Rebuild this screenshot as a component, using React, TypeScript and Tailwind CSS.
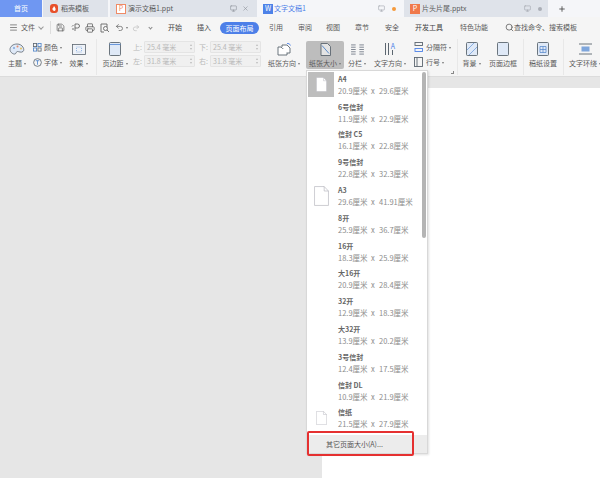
import type { ReactNode } from "react";
import { Menu, Monitor, Plus, Printer, Save, Undo2, Redo2, Search, X } from "lucide-react";

// name + the two dimensions of every paper size in the dropdown
const papers = [
  { name: "A4", w: "20.9", h: "29.6" },
  { name: "6号信封", w: "11.9", h: "22.9" },
  { name: "信封 C5", w: "16.1", h: "22.8" },
  { name: "9号信封", w: "22.8", h: "32.3" },
  { name: "A3", w: "29.6", h: "41.91" },
  { name: "8开", w: "25.9", h: "36.7" },
  { name: "16开", w: "18.3", h: "25.9" },
  { name: "大16开", w: "20.9", h: "28.4" },
  { name: "32开", w: "12.9", h: "18.3" },
  { name: "大32开", w: "13.9", h: "20.2" },
  { name: "3号信封", w: "12.4", h: "17.5" },
  { name: "信封 DL", w: "10.9", h: "21.9" },
  { name: "信纸", w: "21.5", h: "27.9" },
];

function Sheet({ className }: { className: string }) {
  return (
    <svg className={className} viewBox="0 0 14 18" preserveAspectRatio="none">
      <path d="M.5.5h9l4 4v13H.5z" fill="#fff" stroke="#b4b4bc" strokeWidth="0.6" />
      <path d="M9.5.5v4h4" fill="none" stroke="#b4b4bc" strokeWidth="0.6" />
    </svg>
  );
}

function Caret() {
  return <span className="ml-[2px] inline-block h-0 w-0 border-x-[1.5px] border-t-[2px] border-x-transparent border-t-[#777] align-middle" />;
}

function Big({ label, children, className, caret }: { label: string; children: ReactNode; className: string; caret?: boolean }) {
  return (
    <div className={`flex h-[28px] shrink-0 flex-col items-center rounded-[2px] ${className}`}>
      <div className="flex h-[16px] items-center justify-center">{children}</div>
      <span className="h-[12px] whitespace-nowrap leading-[12px]">
        {label}
        {caret && <Caret />}
      </span>
    </div>
  );
}

function Margin({ label, value }: { label: string; value: string }) {
  return (
    <div className="flex h-[12px] items-center text-[#b8b8b8]">
      <span className="w-[11px]">{label}</span>
      <span className="flex h-[12px] w-[51px] items-center justify-between rounded-[1px] border border-[#e4e4e4] bg-[#f0f0f0] px-[2px]">
        {value}
        <span className="flex flex-col gap-[2px]">
          <span className="h-0 w-0 border-x-[1.5px] border-b-[2px] border-x-transparent border-b-[#bbb]" />
          <span className="h-0 w-0 border-x-[1.5px] border-t-[2px] border-x-transparent border-t-[#bbb]" />
        </span>
      </span>
    </div>
  );
}

function Sep({ className }: { className: string }) {
  return <div className={`-mt-[2px] h-[36px] w-px shrink-0 bg-[#e8e8e8] ${className}`} />;
}

function DocIcon({ children }: { children?: ReactNode }) {
  return (
    <svg width="12" height="14" viewBox="0 0 12 14" fill="none" stroke="#5c6670" strokeWidth="0.9">
      <rect x="0.500" y="0.500" width="11" height="13" rx="1" fill="#dfe9f7" />
      {children}
    </svg>
  );
}

export default function App() {
  return (
    <div className="relative flex h-[478px] w-[600px] flex-col overflow-hidden bg-[#e6e6e6] font-['Noto_Sans_CJK_SC','Liberation_Sans',sans-serif] text-[7px] text-[#5a5a5a]">
      {/* tab strip */}
      <div className="flex h-[17px] shrink-0 bg-[#f5f6f9]">
        <div className="flex w-[42px] items-center justify-center bg-[#6f97f2] text-white">首页</div>
        <div className="ml-px flex w-[65px] items-center gap-[3px] bg-[#dfe3ea] pl-[7px]">
          <svg width="8" height="9" viewBox="0 0 8 9">
            <rect width="8" height="9" rx="3" fill="#e8502a" />
            <path d="M4 2c1 1.500 2 2.500 1.500 4S3 7 2.500 5.500 3.500 4 4 2z" fill="#fff" />
          </svg>
          稻壳模板
        </div>
        <div className="ml-[2px] flex w-[147px] items-center bg-[#dfe3ea] pl-[6px] pr-[8px]">
          <span className="mr-[2px] flex h-[10px] w-[10px] items-center justify-center border border-[#ef8a66] bg-white text-[7px] leading-none text-[#ef8a66]">P</span>
          <span className="flex-1">演示文稿1.ppt</span>
          <Monitor size={7} color="#8a8f98" />
          <X size={7} color="#8a8f98" className="ml-[5px]" />
        </div>
        <div className="ml-px flex w-[145px] items-center bg-[#f5f6f9] pl-[5px] pr-[7px] text-[#4d7fe8]">
          <span className="mr-px flex h-[10px] w-[10px] items-center justify-center bg-[#4d82e8] text-[7px] leading-none text-white">W</span>
          <span className="flex-1">文字文稿1</span>
          <Monitor size={7} color="#a0a4ac" />
          <span className="ml-[7px] h-[4px] w-[4px] rounded-full bg-[#f59a3d]" />
        </div>
        <div className="ml-px flex w-[144px] items-center bg-[#dfe3ea] pl-[6px] pr-[6px]">
          <span className="mr-[2px] flex h-[10px] w-[10px] items-center justify-center bg-[#f0794a] text-[7px] leading-none text-white">P</span>
          <span className="flex-1">片头片尾.pptx</span>
          <Monitor size={7} color="#a0a4ac" />
          <span className="ml-[7px] h-[4px] w-[4px] rounded-full bg-[#aaaeb6]" />
        </div>
        <div className="ml-[10px] flex items-center">
          <Plus size={8} color="#444" strokeWidth={2.5} />
        </div>
      </div>

      {/* menu row */}
      <div className="flex h-[21px] shrink-0 items-center bg-[#f5f5f5]">
        <Menu size={9} color="#666" className="ml-[9px]" />
        <span className="ml-[3px]">文件</span>
        <span className="-mt-[2px] ml-[4px] h-[4px] w-[4px] rotate-45 border-b border-r border-[#999]" />
        <div className="ml-[7px] h-[13px] w-px bg-[#ddd]" />
        <Save size={9} color="#666" className="ml-[5px]" />
        <svg width="9" height="9" viewBox="0 0 9 9" fill="none" stroke="#666" strokeWidth="0.9" className="ml-[6px]">
          <path d="M4 8V1h2.500a2 2 0 010 4H4M1 3.500l1.500-1.500M1 6h2" />
        </svg>
        <Printer size={10} color="#666" className="ml-[5px]" />
        <svg width="10" height="10" viewBox="0 0 10 10" fill="none" stroke="#666" strokeWidth="0.9" className="ml-[5px]">
          <path d="M7 4V1H1v8h3" />
          <circle cx="5.500" cy="5.500" r="2" />
          <path d="M7 7l2 2" />
        </svg>
        <Undo2 size={9} color="#666" className="ml-[5px]" />
        <Caret />
        <Redo2 size={8} color="#bbb" className="ml-[4px]" />
        <span className="ml-[9px] h-[3px] w-[3px] rotate-45 border-b border-r border-[#888]" />
        <span className="ml-[16px] text-[#444]">开始</span>
        <span className="ml-[15px] text-[#444]">插入</span>
        <span className="ml-[9px] rounded-full bg-[#4d7fe8] px-[5.5px] py-px leading-[10px] text-white">页面布局</span>
        <span className="ml-[10px]">引用</span>
        <span className="ml-[15px]">审阅</span>
        <span className="ml-[14px]">视图</span>
        <span className="ml-[15px]">章节</span>
        <span className="ml-[16px]">安全</span>
        <span className="ml-[16px] text-[#444]">开发工具</span>
        <span className="ml-[17px]">特色功能</span>
        <Search size={9} color="#555" className="ml-[17px]" />
        <span className="whitespace-nowrap">查找命令、搜索模板</span>
      </div>

      {/* ribbon */}
      <div className="flex h-[39px] shrink-0 items-start border-b border-[#dcdcdc] bg-[#f5f5f5] pt-[3px]">
        <Big label="主题" caret className="ml-[6px] w-[22px]">
          <svg width="16" height="13" viewBox="0 0 16 13" stroke="#5c6670" strokeWidth="0.8">
            <path d="M8 1C4 1 1 3.500 1 6.500S4.500 11.500 6 11 7 8.500 8.500 8.500 12 10 14 8.500 14 1 8 1z" fill="#dfe9f7" />
            <circle cx="5" cy="5" r="1" fill="#7ea6dc" stroke="none" />
            <circle cx="8.500" cy="3.500" r="1" fill="#e58a6a" stroke="none" />
            <circle cx="12" cy="5.500" r="1" fill="#e8c15a" stroke="none" />
          </svg>
        </Big>
        <div className="ml-[5px] flex w-[32px] shrink-0 flex-col gap-[3px]">
          <div className="flex h-[12px] items-center gap-[2px]">
            <svg width="9" height="9" viewBox="0 0 10 10" fill="none" stroke="#5c6670" strokeWidth="0.9">
              <rect x="0.500" y="0.500" width="3.500" height="3.500" />
              <rect x="5.500" y="0.500" width="3.500" height="3.500" stroke="#4d82c8" />
              <rect x="0.500" y="5.500" width="3.500" height="3.500" stroke="#4d82c8" />
              <rect x="5.500" y="5.500" width="3.500" height="3.500" />
            </svg>
            <span className="whitespace-nowrap">颜色<Caret /></span>
          </div>
          <div className="flex h-[12px] items-center gap-[2px]">
            <svg width="9" height="9" viewBox="0 0 10 10" fill="none" stroke="#5c6670" strokeWidth="0.9">
              <circle cx="5" cy="5" r="4.300" />
              <path d="M3 3h4M5 3v4.500" stroke="#4d82c8" />
            </svg>
            <span className="whitespace-nowrap">字体<Caret /></span>
          </div>
        </div>
        <Big label="效果" caret className="w-[27px]">
          <svg width="14" height="11" viewBox="0 0 14 11" fill="none" stroke="#5c6670" strokeWidth="0.8">
            <rect x="0.500" y="0.500" width="13" height="10" fill="#eef2f8" />
            <rect x="4.500" y="3" width="5" height="5" stroke="#7ea6dc" strokeDasharray="1 1" />
          </svg>
        </Big>
        <Sep className="ml-[4px]" />
        <Big label="页边距" caret className="ml-[4px] w-[28px]">
          <svg width="12" height="14" viewBox="0 0 12 14" fill="#dfe9f7" stroke="#5c6670" strokeWidth="0.9">
            <rect x="0.500" y="0.500" width="11" height="13" rx="1" />
            <path d="M0.500 2.500h11" stroke="#5c8fd8" />
          </svg>
        </Big>
        <div className="ml-[4px] flex shrink-0 flex-col gap-[2px]">
          <Margin label="上:" value="25.4 毫米" />
          <Margin label="左:" value="31.8 毫米" />
        </div>
        <div className="ml-[4px] flex shrink-0 flex-col gap-[2px]">
          <Margin label="下:" value="25.4 毫米" />
          <Margin label="右:" value="31.8 毫米" />
        </div>
        <Big label="纸张方向" caret className="ml-[5px] w-[36px]">
          <svg width="15" height="14" viewBox="0 0 15 14" fill="#fff" stroke="#5c6670" strokeWidth="0.9">
            <path d="M1 5h3l1.500 1.500H10V13H1z" />
            <path d="M5 5V3h5l3 3v5h-3" />
            <path d="M10 1.500a3 3 0 013.500 2" fill="none" stroke="#4d82e8" />
          </svg>
        </Big>
        <Big label="纸张大小" caret className="ml-[4px] w-[38px] bg-[#bdbdbd]">
          <svg width="11" height="13" viewBox="0 0 11 13" fill="none" stroke="#5c6670" strokeWidth="0.9">
            <path d="M1 .500h6.500L10.500 3.500v9H1z" fill="#e4e4e4" />
            <path d="M2 2.500l7 8" stroke="#4d82c8" />
          </svg>
        </Big>
        <Big label="分栏" caret className="ml-[2px] w-[22px]">
          <svg width="13" height="11" viewBox="0 0 14 12" stroke="#6a7280" strokeWidth="0.9">
            <path d="M0 1h5M0 3.500h5M0 6h5M0 8.500h5M0 11h5M9 1h5M9 3.500h5M9 6h5M9 8.500h5M9 11h5" />
          </svg>
        </Big>
        <Big label="文字方向" caret className="ml-[4px] w-[36px]">
          <span className="flex items-end gap-[2px]">
            <span className="h-[12px] w-px bg-[#5c6670]" />
            <span className="h-[12px] w-px bg-[#5c6670]" />
            <span className="flex flex-col items-center">
              <span className="text-[7px] leading-[7px] text-[#4d82e8]">A</span>
              <span className="h-[5px] w-px bg-[#5c6670]" />
            </span>
          </span>
        </Big>
        <div className="relative ml-[6px] flex w-[40px] shrink-0 flex-col gap-[3px]">
          <div className="flex h-[12px] items-center gap-[3px]">
            <svg width="9" height="10" viewBox="0 0 9 10" fill="none" stroke="#5c6670" strokeWidth="0.9">
              <rect x="1" y="0.500" width="7.500" height="3" />
              <rect x="1" y="6.500" width="7.500" height="3" stroke="#4d82e8" />
            </svg>
            <span className="whitespace-nowrap">分隔符<Caret /></span>
          </div>
          <div className="flex h-[12px] items-center gap-[3px]">
            <svg width="9" height="10" viewBox="0 0 9 10" fill="none" stroke="#5c6670" strokeWidth="0.9">
              <rect x="0.500" y="0.500" width="8" height="9" />
              <path d="M3 0.500v9" />
            </svg>
            <span className="whitespace-nowrap">行号<Caret /></span>
          </div>
          <span className="absolute left-[37px] top-[30px] h-[3px] w-[3px] border-b border-r border-[#888]" />
        </div>
        <Sep className="ml-[3px]" />
        <Big label="背景" caret className="ml-[2px] w-[23px]">
          <svg width="12" height="14" viewBox="0 0 12 14" fill="#dfe9f7" stroke="#5c6670" strokeWidth="0.9">
            <rect x="0.500" y="0.500" width="11" height="13" rx="1" />
            <path d="M1 8l7-7M3 13l8-8" stroke="#7ea6dc" />
          </svg>
        </Big>
        <Big label="页面边框" className="ml-[4px] w-[32px]">
          <DocIcon />
        </Big>
        <Sep className="ml-[4px]" />
        <Big label="稿纸设置" className="ml-[3px] w-[32px]">
          <DocIcon>
            <path d="M3 4.500h6v6H3zM6 4.500v6M3 7.500h6" stroke="#4d82c8" strokeWidth="0.7" />
          </DocIcon>
        </Big>
        <Sep className="ml-[4px]" />
        <Big label="文字环绕" caret className="ml-[3px] w-[36px]">
          <svg width="13" height="12" viewBox="0 0 13 12" fill="none" stroke="#5c6670" strokeWidth="0.9">
            <path d="M0 1h13M0 11h13" />
            <rect x="2.500" y="3.500" width="8" height="5" fill="#7ea6dc" stroke="none" />
          </svg>
        </Big>
      </div>

      {/* document area */}
      <div className="min-h-0 flex-1 pl-[322px] pt-[11px]">
        <div className="h-full bg-white" />
      </div>

      {/* paper size dropdown */}
      <div className="absolute left-[306px] top-[70px] flex h-[384px] w-[122px] flex-col border border-[#d8d8d8] bg-white pl-px shadow-[1px_1px_2px_rgba(0,0,0,0.12)]">
        <div className="flex h-[364px] shrink-0 overflow-hidden">
          <div className="w-[114px]">
            {papers.map((p, i) => (
              <div key={p.name} className="flex h-[27.8px] items-center">
                <div className={`flex h-[25px] w-[26px] shrink-0 items-center justify-center ${i === 0 ? "bg-[#bdbdbd]" : ""}`}>
                  {i === 0 && <Sheet className="h-[15px] w-[11px]" />}
                  {i === 4 && <Sheet className="h-[20px] w-[15px] shrink-0" />}
                  {i === 12 && <Sheet className="h-[14px] w-[11px]" />}
                </div>
                <div className="ml-[4px] flex flex-col">
                  <span className="h-[11px] whitespace-nowrap font-bold leading-[11px] text-[#666]">{p.name}</span>
                  <span className="flex h-[11px] items-center whitespace-nowrap text-[7.5px] leading-[11px] text-[#8c8c8c]">
                    <span className="w-[33px]">{p.w}厘米</span>
                    <span className="w-[8px]">x</span>
                    <span>{p.h}厘米</span>
                  </span>
                </div>
              </div>
            ))}
          </div>
          <div className="mt-px h-[166px] w-[4px] rounded-full bg-[#b4b4b4]" />
        </div>
        <div className="-ml-px flex flex-1 items-center bg-[#ececec] pl-[19px] text-[#555]">其它页面大小(A)...</div>
      </div>

      {/* red annotation box around the last menu entry */}
      <div className="absolute left-[307px] top-[431px] h-[25px] w-[107px] rounded-[2px] border-2 border-[#e53030]" />
    </div>
  );
}
